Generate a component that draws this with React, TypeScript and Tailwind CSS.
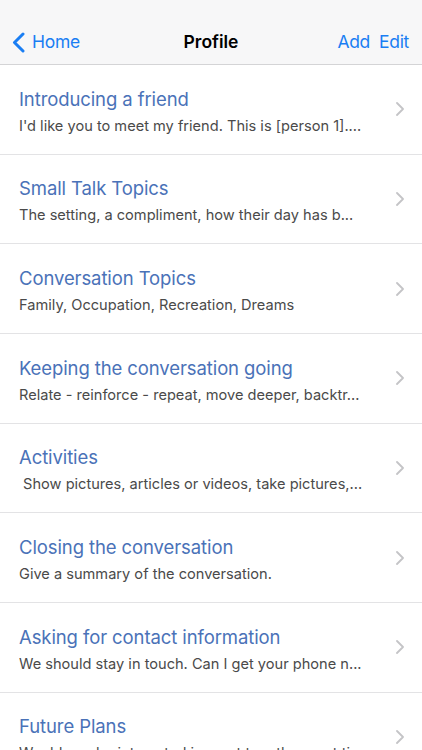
import React from 'react';

interface Topic {
  title: string;
  detail: string;
}

const topics: Topic[] = [
  { title: 'Introducing a friend', detail: "I'd like you to meet my friend. This is [person 1]...." },
  { title: 'Small Talk Topics', detail: 'The setting, a compliment, how their day has b...' },
  { title: 'Conversation Topics', detail: 'Family, Occupation, Recreation, Dreams' },
  { title: 'Keeping the conversation going', detail: 'Relate - reinforce - repeat, move deeper, backtr...' },
  { title: 'Activities', detail: ' Show pictures, articles or videos, take pictures,...' },
  { title: 'Closing the conversation', detail: 'Give a summary of the conversation.' },
  { title: 'Asking for contact information', detail: 'We should stay in touch. Can I get your phone n...' },
  { title: 'Future Plans', detail: 'Would you be interested in a get together next ti...' },
];

const Chevron: React.FC<{ className?: string; strokeWidth?: number }> = ({ className, strokeWidth = 2 }) => (
  <svg viewBox="0 0 8 14" className={className} fill="none" stroke="currentColor" strokeWidth={strokeWidth} strokeLinecap="round" strokeLinejoin="round">
    <path d="M1 1l6 6-6 6" />
  </svg>
);

const App: React.FC = () => {
  return (
    <div className="w-[422px] h-[750px] overflow-hidden bg-white" style={{ fontFamily: 'Inter, "Noto Sans", sans-serif' }}>
      {/* nav bar */}
      <div className="h-[65px] bg-[#f7f7f8] border-b border-[#d4d4d6] pt-[21px] flex items-center relative">
        <div className="flex items-center pl-[12px] text-[#1a7ef3]">
          <svg viewBox="0 0 13 21" className="w-[13px] h-[21px]" fill="none" stroke="currentColor" strokeWidth={3} strokeLinecap="round" strokeLinejoin="round">
            <path d="M11 2L2.5 10.5 11 19" />
          </svg>
          <span className="ml-[7px] text-[17.5px] tracking-[-0.3px]">Home</span>
        </div>
        <div className="absolute left-0 right-0 top-[21px] bottom-0 flex items-center justify-center pointer-events-none">
          <span className="text-[17.5px] font-semibold text-black">Profile</span>
        </div>
        <div className="ml-auto flex items-center gap-[9px] pr-[13px] text-[17.5px] text-[#1a7ef3] tracking-[-0.3px]">
          <span>Add</span>
          <span>Edit</span>
        </div>
      </div>

      {/* list */}
      <ul>
        {topics.map(topic => (
          <li key={topic.title} className="h-[89.67px] border-b border-[#e3e3e5] flex items-center pl-[19px] pr-[18px]">
            <div className="flex-1 min-w-0 pt-[4px]">
              <div className="text-[18.5px] leading-[24px] text-[#4a72b8] tracking-[-0.1px] whitespace-nowrap overflow-hidden">{topic.title}</div>
              <div className="mt-[5px] text-[14.6px] leading-[20px] text-[#4a4a4a] whitespace-pre overflow-hidden">{topic.detail}</div>
            </div>
            <Chevron className="w-[8px] h-[14px] text-[#c4c4c7] ml-2" strokeWidth={1.8} />
          </li>
        ))}
      </ul>
    </div>
  );
};

export default App;
